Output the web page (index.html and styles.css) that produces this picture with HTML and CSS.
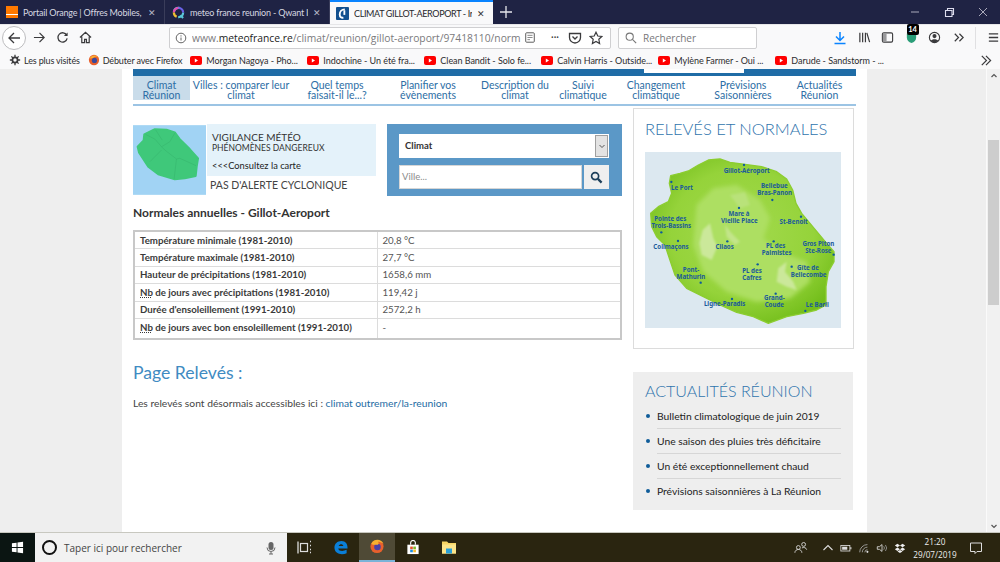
FILE: index.html
```html
<!DOCTYPE html>
<html lang="fr">
<head>
<meta charset="utf-8">
<title>Climat Gillot-Aeroport</title>
<link rel="stylesheet" href="styles.css">
</head>
<body>
<div class="tabstrip">
  <div class="tab">
    <span class="fav-orange"></span><span class="tab-title">Portail Orange | Offres Mobiles,</span><span class="tab-x">✕</span>
  </div>
  <div class="tab">
    <svg class="fav" viewBox="0 0 14 14"><circle cx="7" cy="7" r="5" fill="none" stroke="#5ac8d8" stroke-width="2.4" stroke-dasharray="8 8"/><path d="M2 7a5 5 0 0 1 5-5" fill="none" stroke="#e24ab0" stroke-width="2.4"/><path d="M7 2a5 5 0 0 1 5 5" fill="none" stroke="#6a62e8" stroke-width="2.4"/><path d="M2 7a5 5 0 0 0 3 4.6" fill="none" stroke="#f0c030" stroke-width="2.4"/><path d="M9 10l3 3" stroke="#5ac8d8" stroke-width="2.2"/></svg><span class="tab-title">meteo france reunion - Qwant I</span><span class="tab-x">✕</span>
  </div>
  <div class="tab tab-active">
    <svg class="fav" viewBox="0 0 14 14"><rect width="14" height="14" rx="1" fill="#12508f"/><path d="M9.5 2.5C6 2.500 4 5 4 8s2 4 4 3.500" fill="none" stroke="#fff" stroke-width="2"/><path d="M9 3.500v5" stroke="#fff" stroke-width="2"/></svg><span class="tab-title">CLIMAT GILLOT-AEROPORT - Ir</span><span class="tab-x tab-x-dark">✕</span>
  </div>
  <div class="tab-plus"><svg viewBox="0 0 12 12"><path d="M6 0v12M0 6h12" stroke="#e6e6ec" stroke-width="1.300"/></svg></div>
  <div class="win-controls">
    <svg viewBox="0 0 12 12"><path d="M2 6h8" stroke="#aab" stroke-width="1"/></svg>
    <svg viewBox="0 0 12 12"><path d="M2.500 4.500h6.500v6h-6.500zM4.500 4.500v-2h6v6h-1.500" fill="none" stroke="#dde" stroke-width="1.100"/></svg>
    <svg viewBox="0 0 12 12"><path d="M2 2l8 8M10 2l-8 8" stroke="#aab" stroke-width="1"/></svg>
  </div>
</div>

<div class="navbar">
  <div class="nav-buttons">
    <span class="back-btn"><svg viewBox="0 0 14 14"><path d="M13 7H2M7 2L2 7l5 5" fill="none" stroke="#3a3a3c" stroke-width="1.300"/></svg></span>
    <svg class="nav-ico" viewBox="0 0 14 14"><path d="M1 7h11M7 2l5 5-5 5" fill="none" stroke="#3a3a3c" stroke-width="1.300"/></svg>
    <svg class="nav-ico" viewBox="0 0 14 14"><path d="M11.500 4.500A5 5 0 1 0 12 8" fill="none" stroke="#3a3a3c" stroke-width="1.400"/><path d="M12.500 1.500v4h-4z" fill="#3a3a3c"/></svg>
    <svg class="nav-ico" viewBox="0 0 14 14"><path d="M1 7l6-5.500L13 7M3 6v6.500h3v-3.500h2v3.500h3V6" fill="none" stroke="#3a3a3c" stroke-width="1.300"/></svg>
  </div>
  <div class="urlbar">
    <svg class="ico-info" viewBox="0 0 12 12"><circle cx="6" cy="6" r="4.800" fill="none" stroke="#666" stroke-width="1"/><path d="M6 5.500v3M6 3.300v1.200" stroke="#666" stroke-width="1"/></svg>
    <span class="url"><span class="url-dim">www.</span>meteofrance.re<span class="url-dim">/climat/reunion/gillot-aeroport/97418110/norm</span></span>
    <svg class="url-ico url-reader" viewBox="0 0 14 14"><rect x="2" y="1.500" width="10" height="11" rx="1" fill="none" stroke="#555" stroke-width="1.100"/><path d="M4 4.500h6M4 7h6M4 9.500h3" stroke="#777" stroke-width="1"/></svg>
    <span class="url-sep"></span>
    <span class="url-dots">•••</span>
    <svg class="url-ico" viewBox="0 0 14 14"><path d="M1.500 2.500h11v4a5.500 5.500 0 0 1-11 0z" fill="none" stroke="#3a3a3c" stroke-width="1.300"/><path d="M4.500 5.500L7 8l2.500-2.500" fill="none" stroke="#3a3a3c" stroke-width="1.300"/></svg>
    <svg class="url-ico" viewBox="0 0 14 14"><path d="M7 1.200l1.800 3.800 4 .5-3 2.800.8 4.200L7 10.400l-3.600 2.100.8-4.200-3-2.800 4-.5z" fill="none" stroke="#3a3a3c" stroke-width="1.200"/></svg>
  </div>
  <div class="searchbar">
    <svg class="search-ico" viewBox="0 0 14 14"><circle cx="5.500" cy="5.500" r="4.200" fill="none" stroke="#777" stroke-width="1.200"/><path d="M8.700 8.700L13 13" stroke="#777" stroke-width="1.300"/></svg>
    <span>Rechercher</span>
  </div>
  <div class="tools">
    <svg class="tool tool-dl" viewBox="0 0 14 14"><path d="M7 1v8M3 5.500L7 9.500l4-4M1.500 12.500h11" fill="none" stroke="#0a84ff" stroke-width="1.500"/></svg>
    <svg class="tool" viewBox="0 0 14 14"><path d="M2 2v10M5 2v10M8 2v10M9.500 2l3 10" fill="none" stroke="#3a3a3c" stroke-width="1.300"/></svg>
    <svg class="tool" viewBox="0 0 14 14"><rect x="1.500" y="2" width="11" height="10" rx="1.500" fill="none" stroke="#3a3a3c" stroke-width="1.200"/><rect x="2" y="2.500" width="4" height="9" fill="#9a9a9c"/></svg>
    <span class="shield">
      <svg class="tool" viewBox="0 0 14 14"><path d="M7 1l5 2v4c0 3-2 5-5 6-3-1-5-3-5-6V3z" fill="#2a9d78"/></svg>
      <span class="shield-badge">14</span>
    </span>
    <svg class="tool" viewBox="0 0 14 14"><circle cx="7" cy="7" r="5.500" fill="none" stroke="#3a3a3c" stroke-width="1.200"/><circle cx="7" cy="5.500" r="2.200" fill="#3a3a3c"/><path d="M3 10.500c1-2.300 7-2.300 8 0a5.500 5.500 0 0 1-8 0z" fill="#3a3a3c"/></svg>
    <svg class="tool" viewBox="0 0 14 14"><path d="M3 3l4 4-4 4M8 3l4 4-4 4" fill="none" stroke="#3a3a3c" stroke-width="1.300"/></svg>
    <span class="tool-sep"></span>
    <svg class="tool" viewBox="0 0 14 14"><path d="M2 3h10M2 7h10M2 11h10" stroke="#3a3a3c" stroke-width="1.400"/></svg>
  </div>
</div>

<div class="bookmarks">
  <span class="bm bm-first"><svg class="bm-ico" viewBox="0 0 14 14"><circle cx="7" cy="7" r="3" fill="none" stroke="#3a3a3c" stroke-width="2"/><path d="M7 1v2.500M7 10.500V13M1 7h2.500M10.500 7H13M2.800 2.800l1.800 1.800M9.400 9.400l1.800 1.800M11.200 2.800L9.400 4.600M4.600 9.400l-1.800 1.800" stroke="#3a3a3c" stroke-width="1.500"/></svg>Les plus visités</span>
  <span class="bm bm-ff"><svg class="bm-ico" viewBox="0 0 14 14"><circle cx="7" cy="7" r="6" fill="#e8602c"/><circle cx="7.500" cy="7.500" r="3" fill="#3a4a9c"/><path d="M2 5c2-4 8-5 11 0-2-1.500-3-2-5-1.500C6 4 4 6 2 5z" fill="#f8b030"/></svg>Débuter avec Firefox</span>
  <span class="bm bm-yt"><svg class="yt" viewBox="0 0 12 9"><rect width="12" height="9" rx="2" fill="#f00"/><path d="M4.800 2.500v4L8 4.500z" fill="#fff"/></svg>Morgan Nagoya - Pho...</span>
  <span class="bm bm-yt"><svg class="yt" viewBox="0 0 12 9"><rect width="12" height="9" rx="2" fill="#f00"/><path d="M4.800 2.500v4L8 4.500z" fill="#fff"/></svg>Indochine - Un été fra...</span>
  <span class="bm bm-yt"><svg class="yt" viewBox="0 0 12 9"><rect width="12" height="9" rx="2" fill="#f00"/><path d="M4.800 2.500v4L8 4.500z" fill="#fff"/></svg>Clean Bandit - Solo fe...</span>
  <span class="bm bm-yt"><svg class="yt" viewBox="0 0 12 9"><rect width="12" height="9" rx="2" fill="#f00"/><path d="M4.800 2.500v4L8 4.500z" fill="#fff"/></svg>Calvin Harris - Outside...</span>
  <span class="bm bm-yt"><svg class="yt" viewBox="0 0 12 9"><rect width="12" height="9" rx="2" fill="#f00"/><path d="M4.800 2.500v4L8 4.500z" fill="#fff"/></svg>Mylène Farmer - Oui ...</span>
  <span class="bm bm-yt"><svg class="yt" viewBox="0 0 12 9"><rect width="12" height="9" rx="2" fill="#f00"/><path d="M4.800 2.500v4L8 4.500z" fill="#fff"/></svg>Darude - Sandstorm - ...</span>
  <svg class="bm-more" viewBox="0 0 14 14"><path d="M3 2l5 5-5 5M7.500 2l5 5-5 5" fill="none" stroke="#3a3a3c" stroke-width="1.300"/></svg>
</div>

<div class="viewport">
  <div class="page">
    <div class="banner-strip"><span class="banner-tab"></span></div>
    <nav class="menu">
      <a class="menu-item menu-current">Climat<br>Réunion</a>
      <a class="menu-item m-villes">Villes : comparer leur<br>climat</a>
      <a class="menu-item m-temps">Quel temps<br>faisait-il le...?</a>
      <a class="menu-item m-plan">Planifier vos<br>évènements</a>
      <a class="menu-item m-desc">Description du<br>climat</a>
      <a class="menu-item m-suivi">Suivi<br>climatique</a>
      <a class="menu-item m-chg">Changement<br>climatique</a>
      <a class="menu-item m-prev">Prévisions<br>Saisonnières</a>
      <a class="menu-item m-act">Actualités<br>Réunion</a>
    </nav>
    <div class="columns">
      <main class="col-main">
        <div class="top-row">
          <section class="vigilance">
            <div class="vig-map">
              <svg viewBox="24 60 220 210">
                <rect x="24" y="60" width="220" height="210" fill="#a1d3f4"/>
                <path d="M58 88L90 72 125 74 150 82 165 102 195 132 220 160 216 185 213 213 180 220 150 223 100 208 70 185 42 142 38 125 56 106z" fill="#3fc87a" stroke="#3fc87a" stroke-width="6" stroke-linejoin="round"/>
                <path d="M62 88L90 102 110 125M92 74L112 105M150 84L135 110 110 125 120 135 155 162 165 160 214 182M110 135L75 170M155 162L148 222" fill="none" stroke="#35b36c" stroke-width="1.500"/>
              </svg>
            </div>
            <div class="vig-side">
              <div class="vig-top">
                <div class="vig-title">VIGILANCE MÉTÉO</div>
                <div class="vig-sub">PHÉNOMÈNES DANGEREUX</div>
                <div class="vig-link">&lt;&lt;&lt;Consultez la carte</div>
              </div>
              <div class="vig-cyclone">PAS D'ALERTE CYCLONIQUE</div>
            </div>
          </section>
          <section class="finder">
            <div class="select">
              <span class="select-value">Climat</span>
              <span class="select-arrow"><svg viewBox="0 0 8 8"><path d="M1.500 3L4 5.500 6.500 3" fill="none" stroke="#555" stroke-width="1"/></svg></span>
            </div>
            <div class="finder-row">
              <div class="input">Ville...</div>
              <div class="go"><svg viewBox="0 0 14 14"><circle cx="5.500" cy="5.500" r="3.800" fill="none" stroke="#1d3f5a" stroke-width="1.800"/><path d="M8.500 8.500l4 4" stroke="#1d3f5a" stroke-width="2.400"/></svg></div>
            </div>
          </section>
        </div>
        <h2 class="table-title">Normales annuelles - Gillot-Aeroport</h2>
        <table class="normals">
          <tr><th>Température minimale (1981-2010)</th><td>20,8 °C</td></tr>
          <tr><th>Température maximale (1981-2010)</th><td>27,7 °C</td></tr>
          <tr><th>Hauteur de précipitations (1981-2010)</th><td>1658,6 mm</td></tr>
          <tr><th><abbr>Nb</abbr> de jours avec précipitations (1981-2010)</th><td>119,42 j</td></tr>
          <tr><th>Durée d'ensoleillement (1991-2010)</th><td>2572,2 h</td></tr>
          <tr><th><abbr>Nb</abbr> de jours avec bon ensoleillement (1991-2010)</th><td>-</td></tr>
        </table>
        <h2 class="page-heading">Page Relevés :</h2>
        <p class="note">Les relevés sont désormais accessibles ici : <a class="note-link">climat outremer/la-reunion</a></p>
      </main>
      <aside class="col-side">
        <section class="releves">
          <h2 class="releves-title">RELEVÉS ET NORMALES</h2>
          <svg class="island" viewBox="45 141 588 528">
            <defs>
              <radialGradient id="g" cx="50%" cy="45%" r="60%"><stop offset="0" stop-color="#a3da4e"/><stop offset="0.65" stop-color="#95d33a"/><stop offset="1" stop-color="#72bd1a"/></radialGradient>
              <filter id="soft" x="-20%" y="-20%" width="140%" height="140%"><feGaussianBlur stdDeviation="7"/></filter>
              <filter id="soft2" x="-20%" y="-20%" width="140%" height="140%"><feGaussianBlur stdDeviation="3"/></filter>
            </defs>
            <rect x="45" y="141" width="588" height="528" fill="#dce8f0"/>
            <path d="M122 212L150 205 175 198 205 180 235 165 270 162 300 172 345 178 395 185 440 200 470 222 488 255 498 295 515 325 540 355 565 385 590 415 612 440 612 470 595 500 588 545 588 600 560 615 520 625 470 635 415 655 370 635 320 622 270 600 220 575 170 550 135 510 118 460 105 420 80 395 65 365 62 325 85 305 115 290 125 265 118 235z" fill="url(#g)" stroke="#8ccd30" stroke-width="4" stroke-linejoin="round"/>
            <g filter="url(#soft)">
              <path d="M200 300L250 250 320 240 390 285 420 340 400 400 450 440 530 470 540 530 480 580 380 590 290 560 220 500 190 420z" fill="#addf62"/>
            </g>
            <g filter="url(#soft2)">
              <path d="M218 375L240 355 250 400 262 425 245 465 215 450 208 415z" fill="#cbe89a"/>
              <path d="M285 360L305 385 330 410 315 420 290 395z" fill="#c3e58a"/>
              <path d="M445 490L470 470 465 500 490 530 500 555 470 545 440 530z" fill="#cbe89a"/>
              <path d="M300 270L345 262 360 300 330 310z" fill="#b9e27a"/>
            </g>
            <g class="pins">
              <circle cx="342" cy="180" r="3.500"/><circle cx="124" cy="231" r="3.500"/><circle cx="427" cy="285" r="3.500"/><circle cx="327" cy="309" r="3.500"/><circle cx="513" cy="335" r="3.500"/><circle cx="94" cy="382" r="3.500"/><circle cx="144" cy="408" r="3.500"/><circle cx="292" cy="409" r="3.500"/><circle cx="431" cy="409" r="3.500"/><circle cx="611" cy="449" r="3.500"/><circle cx="383" cy="478" r="3.500"/><circle cx="485" cy="485" r="3.500"/><circle cx="212" cy="533" r="3.500"/><circle cx="437" cy="566" r="3.500"/><circle cx="306" cy="582" r="3.500"/><circle cx="526" cy="618" r="3.500"/>
            </g>
            <g class="map-labels">
              <text x="350" y="203">Gillot-Aéroport</text>
              <text x="156" y="254">Le Port</text>
              <text x="433" y="249">Bellebue</text><text x="434" y="270">Bras-Panon</text>
              <text x="327" y="332">Mare à</text><text x="328" y="353">Vieille Place</text>
              <text x="491" y="356">St-Benoit</text>
              <text x="121" y="347">Pointe des</text><text x="124" y="368">Trois-Bassins</text>
              <text x="123" y="431">Colimaçons</text>
              <text x="284" y="432">Cilaos</text>
              <text x="437" y="430">PL des</text><text x="440" y="451">Palmistes</text>
              <text x="565" y="422">Gros Piton</text><text x="565" y="443">Ste-Rose</text>
              <text x="183" y="500">Pont-</text><text x="183" y="521">Mathurin</text>
              <text x="366" y="504">PL des</text><text x="366" y="525">Cafres</text>
              <text x="534" y="494">Gîte de</text><text x="536" y="515">Bellecombe</text>
              <text x="433" y="586">Grand-</text><text x="433" y="607">Coude</text>
              <text x="284" y="604">Ligne-Paradis</text>
              <text x="562" y="606">Le Baril</text>
            </g>
          </svg>
        </section>
        <section class="news">
          <h2 class="news-title">ACTUALITÉS RÉUNION</h2>
          <ul class="news-list">
            <li>Bulletin climatologique de juin 2019</li>
            <li>Une saison des pluies très déficitaire</li>
            <li>Un été exceptionnellement chaud</li>
            <li>Prévisions saisonnières à La Réunion</li>
          </ul>
        </section>
      </aside>
    </div>
  </div>
  <div class="gutter"></div>
  <div class="scrollbar">
    <svg class="sb-arrow" viewBox="0 0 8 8"><path d="M1.500 5L4 2.500 6.500 5" fill="none" stroke="#555" stroke-width="1.200"/></svg>
    <div class="sb-track"><div class="sb-thumb"></div></div>
    <svg class="sb-arrow" viewBox="0 0 8 8"><path d="M1.500 3L4 5.500 6.500 3" fill="none" stroke="#555" stroke-width="1.200"/></svg>
  </div>
</div>

<footer class="taskbar">
  <div class="start"><svg viewBox="0 0 14 14"><path d="M1 2.500l5-.7V6.500H1zM7 1.700l6-.9V6.500H7zM1 7.500h5v4.700l-5-.7zM7 7.500h6v5.700l-6-.9z" fill="#fff"/></svg></div>
  <div class="task-search">
    <span class="cortana"></span>
    <span class="task-search-text">Taper ici pour rechercher</span>
    <svg class="mic" viewBox="0 0 10 14"><rect x="2.500" y="1" width="5" height="8" rx="2.500" fill="#666"/><path d="M1 6.500a4 4 0 0 0 8 0M5 11v2M3 13h4" fill="none" stroke="#666"/></svg>
  </div>
  <div class="task-apps">
    <span class="app"><svg viewBox="0 0 16 14"><rect x="3.500" y="3" width="7" height="8" fill="none" stroke="#ddd" stroke-width="1.200"/><path d="M1 1v12M13 1h1M13 5h1M13 9h1M13 12h1" stroke="#ddd" stroke-width="1.300"/></svg></span>
    <span class="app"><svg viewBox="0 0 16 16"><path d="M1 8c0-4 3-7 7.500-7S15 4 15 9H5c.5 3 5 3.500 9 1.500V14c-5 2.500-13 1-13-6zm4.500-1.500h5C10 4 6.500 4 5.500 6.500z" fill="#0a7fd8"/></svg></span>
    <span class="app app-active"><svg viewBox="0 0 16 16"><circle cx="8" cy="8" r="7" fill="#e8602c"/><circle cx="8.500" cy="8.500" r="3.500" fill="#4a3fa8"/><path d="M2 5c2-5 10-6 13 0-2-1-4-2.500-6-2 1 1 1 2 0 3-2 0-5 1-7-1z" fill="#f8b030"/></svg></span>
    <span class="app"><svg viewBox="0 0 16 16"><path d="M2 5h12v10H2z" fill="#fff"/><path d="M5.500 5V3a2.500 2.500 0 0 1 5 0v2" fill="none" stroke="#fff" stroke-width="1.200"/><rect x="5" y="7" width="2.800" height="2.800" fill="#e8502c"/><rect x="8.300" y="7" width="2.800" height="2.800" fill="#7cb82c"/><rect x="5" y="10.300" width="2.800" height="2.800" fill="#1a8ce0"/><rect x="8.300" y="10.300" width="2.800" height="2.800" fill="#f8b828"/></svg></span>
    <span class="app"><svg viewBox="0 0 16 14"><path d="M1 1h5l1.500 1.500H15V13H1z" fill="#f6d565"/><rect x="1" y="4" width="14" height="9" fill="#fbe58c"/><rect x="5" y="8" width="6" height="5" fill="#2aa0d8"/></svg></span>
  </div>
  <div class="tray">
    <svg class="tray-people" viewBox="0 0 16 14"><circle cx="5" cy="7" r="2.200" fill="none" stroke="#ddd"/><path d="M1 13c0-5 8-5 8 0" fill="none" stroke="#ddd"/><circle cx="11" cy="3.500" r="2.200" fill="none" stroke="#ddd"/><path d="M9 7.500c2-1 5-.5 5.500 2" fill="none" stroke="#ddd"/></svg>
    <svg class="tray-ico" viewBox="0 0 12 12"><path d="M1.500 8L6 3.500 10.500 8" fill="none" stroke="#ddd" stroke-width="1.100"/></svg>
    <svg class="tray-ico" viewBox="0 0 14 12"><rect x="1" y="3" width="10.500" height="6.500" fill="none" stroke="#ddd"/><rect x="2.500" y="4.500" width="6" height="3.500" fill="#ddd"/><rect x="12" y="5" width="1.300" height="2.500" fill="#ddd"/></svg>
    <svg class="tray-ico" viewBox="0 0 14 12"><path d="M2 11A9 9 0 0 1 11 2M5 11a6 6 0 0 1 6-6M8 11a3 3 0 0 1 3-3" fill="none" stroke="#aaa" stroke-width="1"/><circle cx="11" cy="10.500" r="1.200" fill="#ddd"/></svg>
    <svg class="tray-ico" viewBox="0 0 14 12"><path d="M1.500 4.500h2.500L7 2v8L4 7.500H1.500z" fill="none" stroke="#ddd"/><path d="M9 4a3 3 0 0 1 0 4M11 2.500a5.500 5.500 0 0 1 0 7" fill="none" stroke="#999"/></svg>
    <svg class="tray-ico" viewBox="0 0 14 12"><path d="M4 1L7 3 4 5 1 3zM10 1l3 2-3 2-3-2zM4 5.400L7 7.400 4 9.400 1 7.400zM10 5.400l3 2-3 2-3-2zM4 10l3-1.800L10 10l-3 1.800z" fill="#eee"/></svg>
    <div class="clock"><span>21:20</span><span>29/07/2019</span></div>
    <svg class="tray-notif" viewBox="0 0 14 14"><path d="M1.500 2h11v8.500H8L6 12.500V10.500H1.500z" fill="none" stroke="#ddd" stroke-width="1"/></svg>
  </div>
</footer>
</body>
</html>
```
FILE: styles.css
```css
* { box-sizing: border-box; }
html, body { margin: 0; padding: 0; }
body {
  width: 1000px;
  height: 562px;
  overflow: hidden;
  display: flex;
  flex-direction: column;
  font-family: "Lato", "Liberation Sans", sans-serif;
  background: #fff;
}
svg { display: block; flex: none; }

/* Browser tab strip */
.tabstrip {
  height: 24px;
  flex: none;
  display: flex;
  background: #1f2344;
}
.tab {
  width: 165px;
  display: flex;
  align-items: center;
  padding: 0 8px 0 6px;
  gap: 5px;
  border-right: 1px solid #3a3d5a;
  color: #d6d7e0;
  font-size: 9px;
  letter-spacing: -0.2px;
  white-space: nowrap;
}
.tab:nth-child(2) { padding-left: 7px; }
.tab-active {
  width: 163px;
  background: #f9f9fa;
  color: #26262a;
  border-top: 2px solid #0a84ff;
  border-right: 0;
  padding-left: 6px;
  letter-spacing: -0.35px;
}
.fav-orange { width: 12px; height: 12px; background: linear-gradient(#ff7900 70%, #fff 70%, #fff 78%, #ff7900 78%); flex: none; }
.fav { width: 13px; height: 13px; }
.tab-title { flex: 1; overflow: hidden; }
.tab-x { font-size: 9px; color: #b8b9c8; }
.tab-x-dark { color: #333; }
.tab-plus { width: 26px; padding: 6px 7px; }
.win-controls {
  margin-left: auto;
  display: flex;
  gap: 22px;
  padding: 6px 11px 0 0;
}
.win-controls svg { width: 12px; height: 12px; }

/* Navigation bar */
.navbar {
  height: 26px;
  flex: none;
  display: flex;
  align-items: center;
  background: #f9f9fa;
  border-top: 1px solid #e6e6e8;
}
.nav-buttons {
  width: 169px;
  display: flex;
  align-items: center;
  gap: 10px;
  padding-left: 2px;
}
.back-btn {
  width: 24px;
  height: 24px;
  margin-right: -3px;
  border: 1px solid #bdbdbf;
  border-radius: 50%;
  background: #fff;
  display: flex;
  align-items: center;
  justify-content: center;
}
.back-btn svg { width: 14px; height: 14px; }
.nav-ico { width: 13px; height: 13px; }
.urlbar {
  width: 442px;
  height: 22px;
  display: flex;
  align-items: center;
  padding: 0 3px 0 5px;
  background: #fff;
  border: 1px solid #cfcfd1;
  border-radius: 2px;
  font-family: "Open Sans", "Liberation Sans", sans-serif;
  font-size: 10.300px;
}
.ico-info { width: 12px; height: 12px; margin-right: 5px; }
.url { width: 330px; overflow: hidden; white-space: nowrap; color: #222; flex: none; }
.url-dim { color: #7a7a7c; }
.url-ico { width: 14px; height: 14px; margin-left: 2px; margin-right: 5px; }
.url-reader { width: 12px; height: 13px; margin-left: 2px; margin-right: 8px; }
.url-sep { width: 1px; height: 16px; background: #e0e0e2; margin-right: 7px; }
.url-dots { font-size: 7px; color: #444; margin-right: 7px; }
.searchbar {
  width: 139px;
  height: 22px;
  margin-left: 7px;
  display: flex;
  align-items: center;
  gap: 6px;
  padding-left: 6px;
  background: #fff;
  border: 1px solid #cfcfd1;
  border-radius: 2px;
  color: #77777a;
  font-family: "Open Sans", "Liberation Sans", sans-serif;
  font-size: 10px;
}
.search-ico { width: 12px; height: 12px; }
.tools {
  flex: 1;
  display: flex;
  align-items: center;
  gap: 10.500px;
  padding-left: 76px;
}
.tool { width: 13px; height: 13px; }
.tool-dl { width: 14px; height: 14px; }
.shield { position: relative; display: block; }
.shield-badge {
  position: absolute;
  left: 2px;
  top: -7px;
  width: 12px;
  height: 11px;
  background: #000;
  color: #fff;
  font-size: 7.500px;
  font-weight: 700;
  line-height: 11px;
  text-align: center;
  border-radius: 2px;
}
.tool-sep { width: 1px; height: 22px; background: #e0e0e2; }

/* Bookmarks */
.bookmarks {
  height: 19px;
  flex: none;
  display: flex;
  align-items: center;
  padding: 1px 0 0 9px;
  background: #f9f9fa;
  color: #2c2c2e;
  font-size: 9px;
}
.bm { display: flex; align-items: center; gap: 4px; white-space: nowrap; }
.bm-first, .bm-ff { gap: 3px; margin-right: 8px; letter-spacing: -0.15px; }
.bm-yt { width: 117px; letter-spacing: -0.05px; }
.bm-ico { width: 12px; height: 12px; }
.yt { width: 12px; height: 9px; }
.bm-more { width: 13px; height: 13px; margin-left: auto; margin-right: 8px; }

/* Page viewport */
.viewport {
  flex: 1;
  min-height: 0;
  display: flex;
  background: #eeeeee;
  padding-left: 122px;
  overflow: hidden;
}
.page {
  width: 745px;
  flex: none;
  background: #fff;
  padding: 0 11px;
}
.banner-strip {
  height: 7px;
  background: #1f6ca6;
  display: flex;
  justify-content: flex-end;
  padding-right: 112px;
}
.banner-tab { width: 100px; height: 4px; background: #fff; }
.menu {
  height: 30px;
  display: flex;
  align-items: flex-start;
  border-bottom: 2px solid #9cc4e4;
  color: #2d6ea5;
  font-size: 10.500px;
  line-height: 10px;
  text-align: center;
}
.menu-item { display: block; padding-top: 4px; white-space: nowrap; }
.menu-current { width: 57px; height: 24px; background: #c9dcea; }
.m-villes { width: 102px; }
.m-temps { width: 90px; }
.m-plan { width: 92px; }
.m-desc { width: 82px; }
.m-suivi { width: 54px; }
.m-chg { width: 92px; }
.m-prev { width: 82px; }
.m-act { width: 71px; }

.columns {
  display: flex;
  gap: 11px;
  padding-top: 2px;
}
.col-main { width: 489px; padding-top: 16px; }
.col-side { width: 221px; }

/* Vigilance + search */
.top-row { display: flex; gap: 11px; }
.vigilance { width: 243px; height: 72px; display: flex; }
.vig-map { width: 73px; height: 71px; flex: none; margin-right: 1px; padding-top: 1px; }
.vig-map svg { width: 73px; height: 70px; }
.vig-side { flex: 1; display: flex; flex-direction: column; }
.vig-top {
  height: 52px;
  background: #e4f2fa;
  padding: 8px 5px 0;
  color: #333;
}
.vig-title { font-size: 10px; line-height: 11px; }
.vig-sub { font-size: 8.500px; line-height: 11px; }
.vig-link { font-size: 9.300px; line-height: 11px; margin-top: 6px; color: #222; }
.vig-cyclone { padding: 3px 3px; font-size: 10.500px; line-height: 12px; color: #444; white-space: nowrap; }
.finder {
  width: 235px;
  height: 72px;
  background: #5b98c7;
  padding: 10px 13px 0 12px;
}
.select {
  height: 24px;
  display: flex;
  align-items: center;
  background: #fff;
  padding: 0 0 2px 6px;
  font-size: 9.500px;
  font-weight: 700;
  color: #333;
}
.select-value { flex: 1; }
.select-arrow {
  width: 13px;
  height: 22px;
  margin: 2px 1px 0 0;
  background: #e3e3e3;
  border: 1px solid #a0a0a0;
  display: flex;
  align-items: center;
  justify-content: center;
}
.select-arrow svg { width: 8px; height: 8px; }
.finder-row { display: flex; gap: 2px; margin-top: 7px; }
.input {
  flex: 1;
  height: 24px;
  background: #fff;
  border: 1px solid #d6d6d6;
  padding-left: 2px;
  font-size: 9.500px;
  line-height: 22px;
  color: #8c8c8c;
}
.go {
  width: 25px;
  height: 24px;
  background: #efefef;
  display: flex;
  align-items: center;
  justify-content: center;
}
.go svg { width: 13px; height: 13px; }

/* Table */
.table-title {
  margin: 10px 0 11px;
  font-size: 12px;
  line-height: 13px;
  font-weight: 700;
  color: #333;
}
.normals {
  width: 489px;
  border-collapse: collapse;
  border: 2px solid #c8c8c8;
  font-size: 9.700px;
  color: #3a3a3a;
}
.normals th, .normals td {
  height: 17.500px;
  padding: 0 5px 1px;
  text-align: left;
  border: 1px solid #dcdcdc;
}
.normals tr:last-child th, .normals tr:last-child td { height: 20px; padding-bottom: 2px; }
.normals th { width: 243px; font-weight: 700; white-space: nowrap; }
.normals td { color: #555; }
.normals abbr { text-decoration: underline dotted; }
.page-heading {
  margin: 22px 0 0;
  font-size: 17.600px;
  line-height: 22px;
  font-weight: 400;
  color: #3f8bc2;
}
.note { margin: 13px 0 0; font-size: 10.300px; line-height: 13px; color: #444; }
.note-link { color: #236ca3; }

/* Sidebar */
.releves {
  height: 241px;
  border: 1px solid #dcdcdc;
  padding: 10px 11px 0;
}
.releves-title {
  margin: 0 0 13px;
  font-size: 16.500px;
  line-height: 20px;
  font-weight: 300;
  color: #2f74ad;
  white-space: nowrap;
}
.island { width: 196px; height: 176px; }
.pins circle { fill: #0e5a9c; }
.map-labels text {
  font-family: "Noto Sans", "Liberation Sans", sans-serif;
  font-size: 18.500px;
  font-weight: 700;
  fill: #1b5a9a;
  text-anchor: middle;
}
.news {
  margin-top: 23px;
  width: 220px;
  height: 138px;
  background: #eeeeee;
  padding: 9px 12px 0;
}
.news-title {
  margin: 0;
  font-size: 16px;
  line-height: 19px;
  font-weight: 300;
  color: #2f74ad;
  white-space: nowrap;
}
.news-list {
  list-style: none;
  margin: 4px 0 0;
  padding: 0;
}
.news-list li {
  position: relative;
  margin-left: 12px;
  height: 25px;
  line-height: 24px;
  font-size: 10.300px;
  color: #222;
  border-bottom: 1px solid #d6d6d6;
  white-space: nowrap;
}
.news-list li:last-child { border-bottom: 0; }
.news-list li::before {
  content: "";
  position: absolute;
  left: -11px;
  top: 10px;
  width: 4px;
  height: 4px;
  border-radius: 50%;
  background: #0f5c99;
}

/* Scrollbar */
.gutter { width: 120px; flex: none; border-right: 1px solid #fafafa; }
.scrollbar {
  flex: 1;
  display: flex;
  flex-direction: column;
  align-items: center;
  background: #f1f1f1;
  padding: 3px 0 2px;
}
.sb-arrow { width: 8px; height: 8px; }
.sb-track { flex: 1; width: 100%; padding: 60px 1px 0; }
.sb-thumb { height: 165px; background: #cdcdcd; }

/* Windows taskbar */
.taskbar {
  height: 30px;
  flex: none;
  display: flex;
  background: #2a2510;
  color: #eee;
  font-family: "Open Sans", "Liberation Sans", sans-serif;
  border-top: 1px solid #c8c8c0;
}
.start {
  width: 35px;
  background: #0b1512;
  display: flex;
  align-items: center;
  justify-content: center;
}
.start svg { width: 13px; height: 13px; }
.task-search {
  width: 252px;
  display: flex;
  align-items: center;
  padding: 0 11px 0 7px;
  background: #f2f2f2;
  color: #444;
  font-size: 10px;
}
.cortana { width: 15px; height: 15px; border: 2px solid #111; border-radius: 50%; margin-right: 7px; flex: none; }
.task-search-text { flex: 1; }
.mic { width: 10px; height: 14px; }
.task-apps { display: flex; }
.app {
  width: 36px;
  display: flex;
  align-items: center;
  justify-content: center;
}
.app svg { width: 16px; height: 15px; }
.app-active { background: #4f4a36; border-bottom: 2px solid #7ab3d8; }
.tray {
  margin-left: auto;
  display: flex;
  align-items: center;
  gap: 6px;
  padding-right: 17px;
}
.tray-people { width: 14px; height: 13px; margin-right: 8px; }
.tray-ico { width: 12px; height: 12px; }
.clock {
  width: 46px;
  margin-right: 5px;
  display: flex;
  flex-direction: column;
  align-items: center;
  font-size: 8.200px;
  line-height: 13px;
}
.tray-notif { width: 14px; height: 14px; }
```
